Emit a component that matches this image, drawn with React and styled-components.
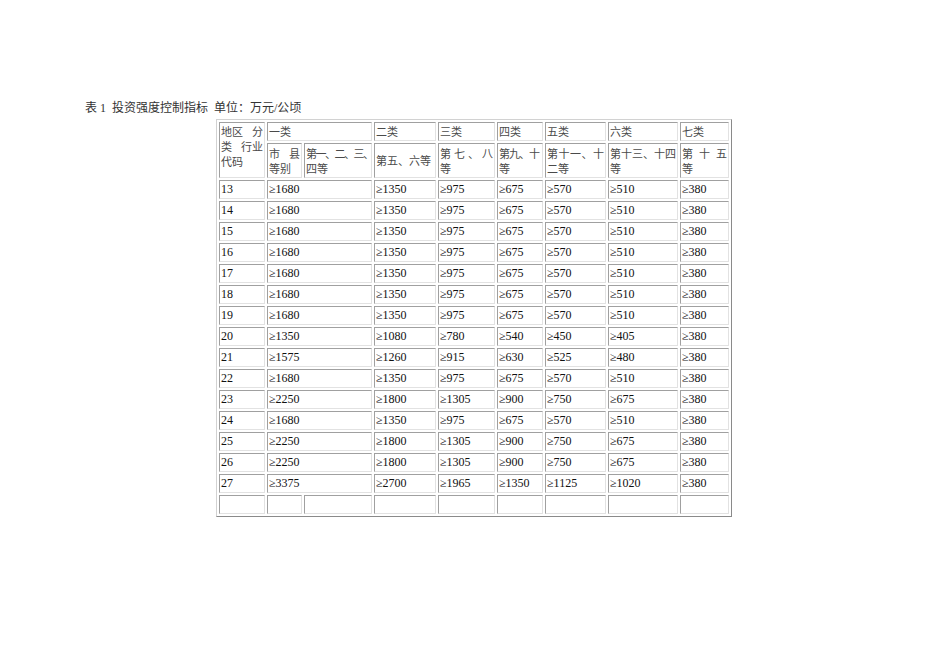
import styled, { createGlobalStyle } from "styled-components";

const Global = createGlobalStyle`
  html, body {
    margin: 0;
    padding: 0;
    background: #fff;
  }
`;

const Page = styled.div`
  width: 950px;
  height: 672px;
  box-sizing: border-box;
  padding: 101px 0 0 85px;
  font-family: "Liberation Serif", "Noto Sans CJK SC", serif;
  color: #111;
`;

const Caption = styled.p`
  margin: 0 0 3px;
  font-size: 12px;
  line-height: 15px;
  color: #333;
  white-space: pre;
`;

const Table = styled.table`
  margin-left: 131px;
  width: 516px;
  table-layout: fixed;
  border-collapse: separate;
  border-spacing: 2px;
  border: 1px solid;
  border-color: #d2d2d2 #8a8a8a #8a8a8a #d2d2d2;
`;

const HeadRow = styled.tr`
  height: ${(p) => p.$h}px;
`;

const Cell = styled.td`
  box-sizing: border-box;
  padding: 1px;
  border: 1px solid;
  border-color: #a0a0a0 #e2e2e2 #e2e2e2 #a0a0a0;
  vertical-align: ${(p) => p.$valign || "middle"};
  text-align: left;
  overflow: visible;
  font-size: ${(p) => (p.$cjk ? 11 : 12)}px;
  line-height: 15px;
  color: ${(p) => (p.$cjk ? "#4a4a4a" : "#111")};
  font-family: ${(p) =>
    p.$cjk
      ? `"Noto Sans CJK SC", sans-serif`
      : `"Liberation Serif", "Noto Sans CJK SC", serif`};
`;

const Line = styled.span`
  display: block;
  white-space: nowrap;
  letter-spacing: ${(p) => p.$tight || 0}px;
`;

const SpreadLine = styled.span`
  display: flex;
  justify-content: space-between;
  white-space: nowrap;
`;

const Spread = ({ text }) => (
  <SpreadLine>
    {text.split(" ").map((part, i) => (
      <span key={i}>{part}</span>
    ))}
  </SpreadLine>
);

const widths = [46, 35, 68, 62, 57, 46, 61, 70, 49];

const classes = ["二类", "三类", "四类", "五类", "六类", "七类"];

const rows = [
  ["13", 1680, 1350, 975, 675, 570, 510, 380],
  ["14", 1680, 1350, 975, 675, 570, 510, 380],
  ["15", 1680, 1350, 975, 675, 570, 510, 380],
  ["16", 1680, 1350, 975, 675, 570, 510, 380],
  ["17", 1680, 1350, 975, 675, 570, 510, 380],
  ["18", 1680, 1350, 975, 675, 570, 510, 380],
  ["19", 1680, 1350, 975, 675, 570, 510, 380],
  ["20", 1350, 1080, 780, 540, 450, 405, 380],
  ["21", 1575, 1260, 915, 630, 525, 480, 380],
  ["22", 1680, 1350, 975, 675, 570, 510, 380],
  ["23", 2250, 1800, 1305, 900, 750, 675, 380],
  ["24", 1680, 1350, 975, 675, 570, 510, 380],
  ["25", 2250, 1800, 1305, 900, 750, 675, 380],
  ["26", 2250, 1800, 1305, 900, 750, 675, 380],
  ["27", 3375, 2700, 1965, 1350, 1125, 1020, 380],
];

export default function App() {
  return (
    <Page>
      <Global />
      <Caption>表 1  投资强度控制指标  单位：万元/公顷</Caption>
      <Table>
        <colgroup>
          {widths.map((w, i) => (
            <col key={i} style={{ width: w }} />
          ))}
        </colgroup>
        <tbody>
          <HeadRow $h={19}>
            <Cell $cjk $valign="top" rowSpan={2}>
              <Spread text="地区 分" />
              <Spread text="类 行业" />
              <Line>代码</Line>
            </Cell>
            <Cell $cjk colSpan={2}>一类</Cell>
            {classes.map((c) => (
              <Cell $cjk key={c}>{c}</Cell>
            ))}
          </HeadRow>
          <HeadRow $h={35}>
            <Cell $cjk>
              <Spread text="市 县" />
              <Line>等别</Line>
            </Cell>
            <Cell $cjk>
              <Line $tight={-1.5}>第一、二、三、</Line>
              <Line>四等</Line>
            </Cell>
            <Cell $cjk>
              <Line>第五、六等</Line>
            </Cell>
            <Cell $cjk>
              <Spread text="第 七 、 八" />
              <Line>等</Line>
            </Cell>
            <Cell $cjk>
              <Line $tight={-1}>第九、十</Line>
              <Line>等</Line>
            </Cell>
            <Cell $cjk>
              <Spread text="第 十 一 、 十" />
              <Line>二等</Line>
            </Cell>
            <Cell $cjk>
              <Line>第十三、十四</Line>
              <Line>等</Line>
            </Cell>
            <Cell $cjk>
              <Spread text="第 十 五" />
              <Line>等</Line>
            </Cell>
          </HeadRow>
          {rows.map(([code, first, ...rest]) => (
            <tr key={code}>
              <Cell>{code}</Cell>
              <Cell colSpan={2}>≥{first}</Cell>
              {rest.map((v, i) => (
                <Cell key={i}>≥{v}</Cell>
              ))}
            </tr>
          ))}
          <tr>
            {widths.map((_, i) => (
              <Cell key={i}>&nbsp;</Cell>
            ))}
          </tr>
        </tbody>
      </Table>
    </Page>
  );
}
